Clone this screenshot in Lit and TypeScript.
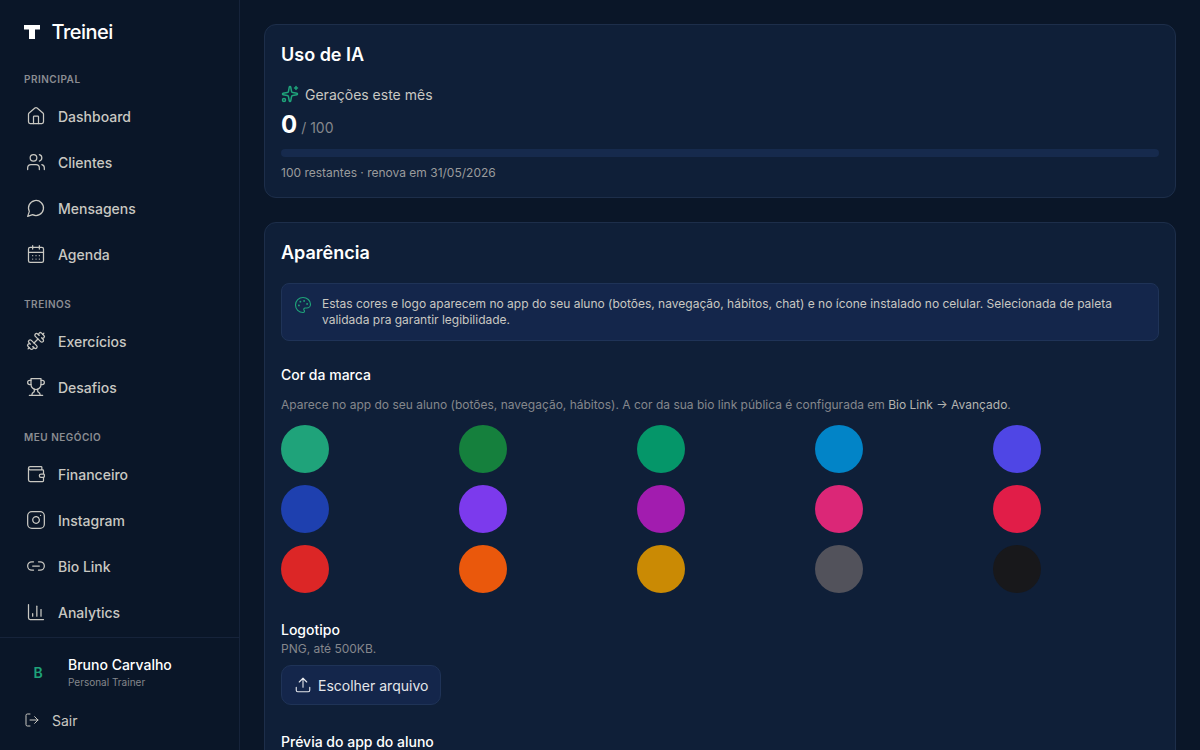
import { LitElement, html, css, svg } from "lit";
import { customElement } from "lit/decorators.js";

const ic = (body: unknown) => html`<svg class="ic" viewBox="0 0 24 24" fill="none" stroke="currentColor" stroke-width="1.5" stroke-linecap="round" stroke-linejoin="round">${body}</svg>`;

const icons: Record<string, unknown> = {
  home: svg`<path d="M15 21v-8a1 1 0 0 0-1-1h-4a1 1 0 0 0-1 1v8"/><path d="M3 10a2 2 0 0 1 .709-1.528l7-5.999a2 2 0 0 1 2.582 0l7 5.999A2 2 0 0 1 21 10v9a2 2 0 0 1-2 2H5a2 2 0 0 1-2-2z"/>`,
  users: svg`<path d="M16 21v-2a4 4 0 0 0-4-4H6a4 4 0 0 0-4 4v2"/><path d="M16 3.128a4 4 0 0 1 0 7.744"/><path d="M22 21v-2a4 4 0 0 0-3-3.87"/><circle cx="9" cy="7" r="4"/>`,
  chat: svg`<path d="M7.9 20A9 9 0 1 0 4 16.1L2 22Z"/>`,
  cal: svg`<path d="M8 2v4"/><path d="M16 2v4"/><rect x="3" y="4" width="18" height="18" rx="2"/><path d="M3 10h18"/><path d="M8 14h.01"/><path d="M12 14h.01"/><path d="M16 14h.01"/><path d="M8 18h.01"/><path d="M12 18h.01"/><path d="M16 18h.01"/>`,
  dumb: svg`<path d="M17.596 12.768a2 2 0 1 0 2.829-2.829l-1.768-1.767a2 2 0 0 0 2.828-2.829l-2.828-2.828a2 2 0 0 0-2.829 2.828l-1.767-1.768a2 2 0 1 0-2.829 2.829z"/><path d="m2.5 21.5 1.4-1.4"/><path d="m20.1 3.9 1.4-1.4"/><path d="M5.343 21.485a2 2 0 1 0 2.829-2.828l1.767 1.768a2 2 0 1 0 2.829-2.829l-6.364-6.364a2 2 0 1 0-2.829 2.829l1.768 1.767a2 2 0 0 0-2.828 2.829z"/><path d="m9.600 14.400 4.800-4.800"/>`,
  trophy: svg`<path d="M6 9H4.500a2.500 2.500 0 0 1 0-5H6"/><path d="M18 9h1.500a2.500 2.500 0 0 0 0-5H18"/><path d="M4 22h16"/><path d="M10 14.660V17c0 .55-.47.98-.97 1.210C7.850 18.750 7 20.240 7 22"/><path d="M14 14.660V17c0 .55.47.98.97 1.210C16.150 18.750 17 20.240 17 22"/><path d="M18 2H6v7a6 6 0 0 0 12 0V2Z"/>`,
  wallet: svg`<path d="M19 7V4a1 1 0 0 0-1-1H5a2 2 0 0 0 0 4h15a1 1 0 0 1 1 1v4h-3a2 2 0 0 0 0 4h3a1 1 0 0 0 1-1v-2a1 1 0 0 0-1-1"/><path d="M3 5v14a2 2 0 0 0 2 2h15a1 1 0 0 0 1-1v-4"/>`,
  insta: svg`<rect x="2" y="2" width="20" height="20" rx="5" ry="5"/><path d="M16 11.370A4 4 0 1 1 12.630 8 4 4 0 0 1 16 11.370z"/><path d="M17.500 6.500h.01"/>`,
  link: svg`<path d="M9 17H7A5 5 0 0 1 7 7h2"/><path d="M15 7h2a5 5 0 1 1 0 10h-2"/><path d="M8 12h8"/>`,
  chart: svg`<path d="M3 3v16a2 2 0 0 0 2 2h16"/><path d="M18 17V9"/><path d="M13 17V5"/><path d="M8 17v-3"/>`,
  logout: svg`<path d="m16 17 5-5-5-5"/><path d="M21 12H9"/><path d="M9 21H5a2 2 0 0 1-2-2V5a2 2 0 0 1 2-2h4"/>`,
  spark: svg`<path stroke-width="2" d="M11.017 2.814a1 1 0 0 1 1.966 0l1.051 5.558a2 2 0 0 0 1.594 1.594l5.558 1.051a1 1 0 0 1 0 1.966l-5.558 1.051a2 2 0 0 0-1.594 1.594l-1.051 5.558a1 1 0 0 1-1.966 0l-1.051-5.558a2 2 0 0 0-1.594-1.594l-5.558-1.051a1 1 0 0 1 0-1.966l5.558-1.051a2 2 0 0 0 1.594-1.594z"/><path stroke-width="2" d="M20 2v4"/><path stroke-width="2" d="M22 4h-4"/><circle stroke-width="2" cx="4" cy="20" r="2"/>`,
  palette: svg`<path d="M12 22a1 1 0 0 1 0-20 10 9 0 0 1 10 9 5 5 0 0 1-5 5h-2.250a1.750 1.750 0 0 0-1.400 2.800l.3.400a1.750 1.750 0 0 1-1.400 2.800z"/><circle cx="13.500" cy="6.500" r=".5" fill="currentColor"/><circle cx="17.500" cy="10.500" r=".5" fill="currentColor"/><circle cx="6.500" cy="12.500" r=".5" fill="currentColor"/><circle cx="8.500" cy="7.500" r=".5" fill="currentColor"/>`,
  upload: svg`<path d="M12 3v12"/><path d="m17 8-5-5-5 5"/><path d="M21 15v4a2 2 0 0 1-2 2H5a2 2 0 0 1-2-2v-4"/>`,
};

const groups = [
  { title: "PRINCIPAL", items: [["home", "Dashboard"], ["users", "Clientes"], ["chat", "Mensagens"], ["cal", "Agenda"]] },
  { title: "TREINOS", items: [["dumb", "Exercícios"], ["trophy", "Desafios"]] },
  { title: "MEU NEGÓCIO", items: [["wallet", "Financeiro"], ["insta", "Instagram"], ["link", "Bio Link"], ["chart", "Analytics"]] },
];

const colors = [
  "#1fa37a", "#15803d", "#059669", "#0284c7", "#4f46e5",
  "#1e40af", "#7c3aed", "#a21caf", "#db2777", "#e11d48",
  "#dc2626", "#ea580c", "#ca8a04", "#52525b", "#18181b",
];

@customElement("app-root")
export class AppRoot extends LitElement {
  static styles = css`
    :host {
      display: flex;
      width: 100%;
      height: 100vh;
      overflow: hidden;
      background: #0a1628;
      color: #fff;
      font-family: Inter, "Noto Sans", sans-serif;
    }
    .ic { width: 20px; height: 20px; flex: none; }
    .side {
      width: 240px;
      flex: none;
      box-sizing: border-box;
      height: 750px;
      border-right: 1px solid #16233a;
      background: #0a1628;
      display: flex;
      flex-direction: column;
    }
    .brand {
      height: 64px;
      flex: none;
      box-sizing: border-box;
      padding: 0 24px;
      display: flex;
      align-items: center;
      gap: 11.5px;
      font-size: 20px;
      font-weight: 500;
      letter-spacing: -0.5px;
    }
    .logo { width: 16px; height: 14px; flex: none; fill: #fff; }
    .nav { flex: 1; min-height: 0; overflow: hidden; padding: 4px 16px 0; }
    .group { margin-bottom: 16px; }
    .gtitle {
      height: 22px;
      margin-bottom: 3px;
      padding: 0 8px;
      display: flex;
      align-items: center;
      font-size: 10px;
      font-weight: 600;
      letter-spacing: 0.5px;
      color: #8b8d92;
    }
    .item {
      height: 46px;
      display: flex;
      align-items: center;
      gap: 12px;
      padding: 0 10px;
      font-size: 14px;
      font-weight: 500;
      color: #c9c8c2;
    }
    .foot {
      flex: none;
      height: 113px;
      box-sizing: border-box;
      border-top: 1px solid #16233a;
      padding: 8px 16px 0;
    }
    .user { display: flex; align-items: center; gap: 12px; padding: 7px 4px; height: 38px; }
    .avatar {
      width: 36px; height: 36px; flex: none;
      display: flex; align-items: center; justify-content: center;
      color: #1fa37a; font-size: 14px; font-weight: 600;
    }
    .uname { font-size: 14px; font-weight: 500; line-height: 20px; color: #fff; }
    .urole { font-size: 10px; line-height: 14px; color: #85878c; }
    .logout {
      display: flex; align-items: center; gap: 12px;
      padding: 0 8px; height: 36px; margin-top: 4px;
      font-size: 14px; color: #c9c8c2;
    }
    .logout .ic { width: 16px; height: 16px; }
    .main {
      flex: 1;
      min-width: 0;
      padding: 24px;
      display: flex;
      flex-direction: column;
      gap: 24px;
      overflow: hidden;
    }
    .card {
      flex: none;
      background: #0f1f38;
      border: 1px solid #1d2e4a;
      border-radius: 12px;
      padding: 16px;
    }
    h2 { margin: 0; font-size: 18px; font-weight: 600; line-height: 28px; color: #fff; }
    .gen {
      display: flex; align-items: center; gap: 6px;
      margin-top: 15px;
      height: 20px;
      font-size: 14px; color: #c9c8c2;
    }
    .gen .ic { width: 18px; height: 18px; color: #1fa37a; }
    .count { display: flex; align-items: baseline; gap: 4px; margin-top: 5px; height: 32px; }
    .count b { font-size: 24px; font-weight: 700; line-height: 32px; }
    .count span { font-size: 14px; color: #85878c; }
    .bar { height: 8px; border-radius: 4px; background: #162a4d; margin-top: 8px; }
    .note { margin-top: 8px; font-size: 12px; line-height: 16px; color: #9a9b9c; }
    .info {
      margin-top: 16px;
      display: flex; gap: 10px;
      background: #14264b;
      border: 1px solid #1f3357;
      border-radius: 8px;
      padding: 12px;
      font-size: 12px;
      line-height: 16px;
      color: #c9c8c2;
    }
    .info .ic { width: 18px; height: 18px; color: #1fa37a; }
    .h3 { font-size: 14px; font-weight: 500; line-height: 20px; color: #fff; }
    .brandcol { margin-top: 24px; }
    .sub { margin-top: 12px; font-size: 12px; line-height: 16px; color: #85878c; }
    .sub b { font-weight: 400; color: #b4b4b0; }
    .grid {
      margin-top: 12px;
      display: grid;
      grid-template-columns: repeat(5, 1fr);
      gap: 12px;
    }
    .sw { width: 48px; height: 48px; border-radius: 50%; }
    .logosec { margin-top: 27px; }
    .small { font-size: 12px; line-height: 16px; color: #85878c; margin-top: 1px; }
    .btn {
      margin-top: 8px;
      width: 160px; height: 40px;
      box-sizing: border-box;
      display: flex; align-items: center; gap: 6px;
      padding: 0 12px;
      background: #14264b;
      border: 1px solid #1f3357;
      border-radius: 10px;
      font-size: 14px;
      white-space: nowrap;
      color: #e4e6ea;
    }
    .btn .ic { width: 18px; height: 18px; }
    .preview { margin-top: 27px; }
  `;

  render() {
    return html`
      <aside class="side">
        <div class="brand">
          <svg class="logo" viewBox="0 0 16 14"><path d="M0 0h16v4.500h-5v9.500H5V4.500H0z"/></svg>
          <span>Treinei</span>
        </div>
        <nav class="nav">
          ${groups.map((g) => html`
            <div class="group">
              <div class="gtitle">${g.title}</div>
              ${g.items.map(([i, t]) => html`<div class="item">${ic(icons[i])}<span>${t}</span></div>`)}
            </div>`)}
        </nav>
        <div class="foot">
          <div class="user">
            <div class="avatar">B</div>
            <div>
              <div class="uname">Bruno Carvalho</div>
              <div class="urole">Personal Trainer</div>
            </div>
          </div>
          <div class="logout">${ic(icons.logout)}<span>Sair</span></div>
        </div>
      </aside>
      <main class="main">
        <section class="card">
          <h2>Uso de IA</h2>
          <div class="gen">${ic(icons.spark)}<span>Gerações este mês</span></div>
          <div class="count"><b>0</b><span>/ 100</span></div>
          <div class="bar"></div>
          <div class="note">100 restantes · renova em 31/05/2026</div>
        </section>
        <section class="card">
          <h2>Aparência</h2>
          <div class="info">
            ${ic(icons.palette)}
            <span>Estas cores e logo aparecem no app do seu aluno (botões, navegação, hábitos, chat) e no ícone instalado no celular. Selecionada de paleta validada pra garantir legibilidade.</span>
          </div>
          <div class="brandcol">
            <div class="h3">Cor da marca</div>
            <div class="sub">Aparece no app do seu aluno (botões, navegação, hábitos). A cor da sua bio link pública é configurada em <b>Bio Link → Avançado</b>.</div>
            <div class="grid">
              ${colors.map((c) => html`<div class="sw" style="background:${c}"></div>`)}
            </div>
          </div>
          <div class="logosec">
            <div class="h3">Logotipo</div>
            <div class="small">PNG, até 500KB.</div>
            <div class="btn">${ic(icons.upload)}<span>Escolher arquivo</span></div>
          </div>
          <div class="preview h3">Prévia do app do aluno</div>
        </section>
      </main>
    `;
  }
}
